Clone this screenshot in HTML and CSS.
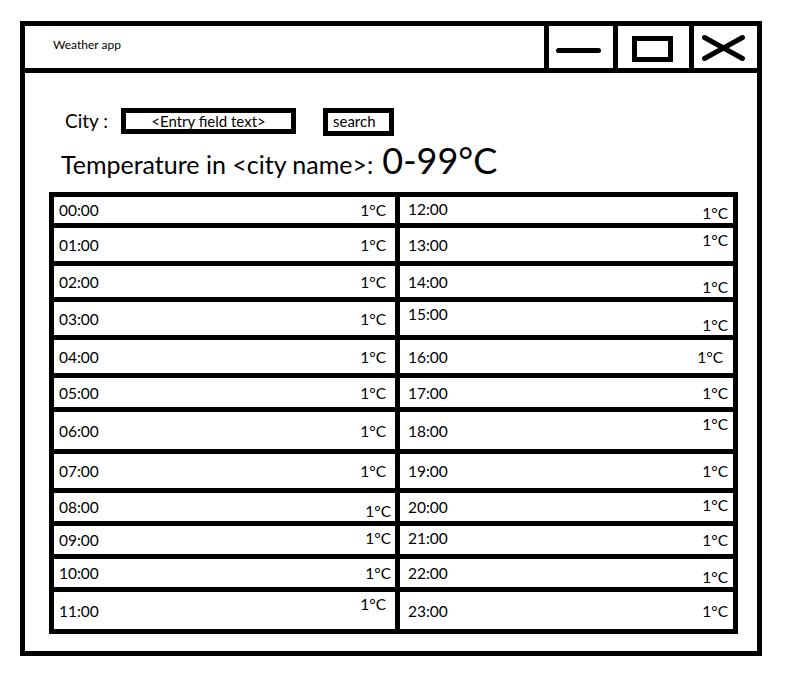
FILE: index.html
```html
<!DOCTYPE html>
<html>
<head>
<meta charset="utf-8">
<title>Weather app</title>
<link rel="stylesheet" href="styles.css">
</head>
<body>
<div class="window">
  <div class="titlebar">
    <div class="title">Weather app</div>
    <div class="wbtn wbtn-min">
      <svg width="64" height="42" viewBox="0 0 64 42"><line x1="9.5" y1="24.5" x2="49.5" y2="24.5" stroke="#000" stroke-width="5" stroke-linecap="round"/></svg>
    </div>
    <div class="wbtn wbtn-max">
      <svg width="71" height="42" viewBox="0 0 71 42"><rect x="16.5" y="12.5" width="36" height="21" fill="none" stroke="#000" stroke-width="5"/></svg>
    </div>
    <div class="wbtn wbtn-close">
      <svg width="63" height="42" viewBox="0 0 63 42"><path d="M10.5 11.5 L48.5 32.5 M10.5 32.5 L48.5 11.5" fill="none" stroke="#000" stroke-width="5" stroke-linecap="round"/></svg>
    </div>
  </div>
  <div class="content">
    <div class="controls">
      <span class="city-label">City :</span>
      <div class="entry">&lt;Entry field text&gt;</div>
      <div class="search">search</div>
    </div>
    <div class="heading">
      <span class="heading-text">Temperature in &lt;city name&gt;:</span>
      <span class="heading-value">0-99°C</span>
    </div>
    <div class="hours">
      <div class="cell left"><span class="time">00:00</span><span class="temp">1°C</span></div>
      <div class="cell left"><span class="time">01:00</span><span class="temp">1°C</span></div>
      <div class="cell left"><span class="time">02:00</span><span class="temp">1°C</span></div>
      <div class="cell left"><span class="time">03:00</span><span class="temp">1°C</span></div>
      <div class="cell left"><span class="time">04:00</span><span class="temp">1°C</span></div>
      <div class="cell left"><span class="time">05:00</span><span class="temp">1°C</span></div>
      <div class="cell left"><span class="time">06:00</span><span class="temp">1°C</span></div>
      <div class="cell left"><span class="time">07:00</span><span class="temp">1°C</span></div>
      <div class="cell left"><span class="time">08:00</span><span class="temp lo near">1°C</span></div>
      <div class="cell left"><span class="time">09:00</span><span class="temp hi near">1°C</span></div>
      <div class="cell left"><span class="time">10:00</span><span class="temp near">1°C</span></div>
      <div class="cell left"><span class="time">11:00</span><span class="temp hi">1°C</span></div>
      <div class="cell right"><span class="time hi">12:00</span><span class="temp lo">1°C</span></div>
      <div class="cell right"><span class="time">13:00</span><span class="temp hi">1°C</span></div>
      <div class="cell right"><span class="time">14:00</span><span class="temp lo">1°C</span></div>
      <div class="cell right"><span class="time hi">15:00</span><span class="temp lo">1°C</span></div>
      <div class="cell right"><span class="time">16:00</span><span class="temp far">1°C</span></div>
      <div class="cell right"><span class="time">17:00</span><span class="temp">1°C</span></div>
      <div class="cell right"><span class="time">18:00</span><span class="temp hi">1°C</span></div>
      <div class="cell right"><span class="time">19:00</span><span class="temp">1°C</span></div>
      <div class="cell right"><span class="time">20:00</span><span class="temp hi">1°C</span></div>
      <div class="cell right"><span class="time hi">21:00</span><span class="temp">1°C</span></div>
      <div class="cell right"><span class="time">22:00</span><span class="temp lo">1°C</span></div>
      <div class="cell right"><span class="time">23:00</span><span class="temp">1°C</span></div>
    </div>
  </div>
</div>
</body>
</html>
```
FILE: styles.css
```css
* { box-sizing: border-box; }

html, body {
  margin: 0;
  padding: 0;
  background: #fff;
}

body {
  font-family: Lato, "Open Sans", "Liberation Sans", sans-serif;
  color: #000;
  padding: 21px 0 0 20px;
}

.window {
  width: 742px;
  height: 635px;
  border: 5px solid #000;
  display: flex;
  flex-direction: column;
}

.titlebar {
  height: 47px;
  border-bottom: 5px solid #000;
  display: flex;
  align-items: stretch;
}

.title {
  flex: 1;
  font-size: 12px;
  line-height: 38px;
  padding-left: 28px;
}

.wbtn {
  border-left: 5px solid #000;
  display: flex;
}

.wbtn svg { display: block; }

.wbtn-min { width: 69px; }
.wbtn-max { width: 76px; }
.wbtn-close { width: 68px; }

.content {
  flex: 1;
  display: flex;
  flex-direction: column;
}

.controls {
  display: flex;
  align-items: flex-start;
  margin-top: 35px;
  height: 28px;
  padding-left: 40px;
}

.city-label {
  width: 56px;
  font-size: 19px;
  line-height: 26px;
}

.entry {
  width: 175px;
  height: 26px;
  border: 5px solid #000;
  font-size: 15px;
  line-height: 16px;
  text-align: center;
}

.search {
  margin-left: 27px;
  width: 71px;
  height: 28px;
  border: 5px solid #000;
  font-size: 15px;
  line-height: 17px;
  padding-left: 5px;
}

.heading {
  margin-top: 6px;
  height: 38px;
  display: flex;
  align-items: baseline;
  padding-left: 36px;
}

.heading-text {
  font-size: 25px;
  line-height: 1;
}

.heading-value {
  font-size: 36px;
  line-height: 1;
  margin-left: 9px;
}

.hours {
  margin: 12px 0 0 24px;
  width: 689px;
  background: #000;
  padding: 5px;
  display: grid;
  grid-template-columns: 341px 333px;
  grid-template-rows: 26px 33px 31px 33px 33px 29px 37px 34px 28px 28px 28px 37px;
  grid-auto-flow: column;
  gap: 5px;
}

.cell {
  background: #fff;
  display: flex;
  justify-content: space-between;
  align-items: center;
  font-size: 15.5px;
  line-height: 18px;
}

.cell.left { padding: 0 9px 0 5px; }
.cell.right { padding: 0 5px 0 8px; }

.hi { align-self: flex-start; padding-top: 3px; }
.lo { align-self: flex-end; padding-bottom: 1px; }
.near { margin-right: -5px; }
.far { margin-right: 5px; }
```
